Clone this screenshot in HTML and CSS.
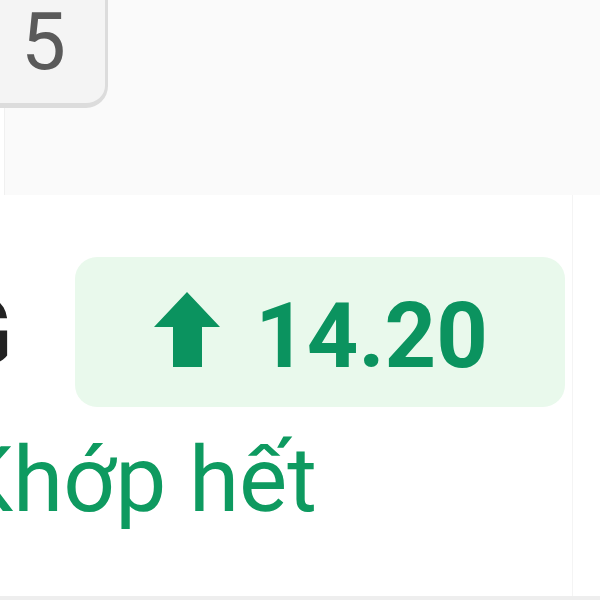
FILE: index.html
```html
<!DOCTYPE html>
<html lang="vi">
<head>
  <meta charset="UTF-8" />
  <meta name="viewport" content="width=device-width, initial-scale=1.0" />
  <title>Khớp lệnh</title>
  <link rel="stylesheet" href="styles.css">
</head>
<body>
  <div class="screen">
    <div class="keypad">
      <div class="key">5</div>
    </div>
    <div class="order">
      <div class="order-row">
        <span class="symbol">G</span>
        <div class="price-badge">
          <svg class="arrow" viewBox="0 0 66 75" width="66" height="75">
            <path d="M33 0 L66 35 L48 35 L48 75 L19 75 L19 35 L0 35 Z" fill="#0b935f"/>
          </svg>
          <span class="price">14.20</span>
        </div>
      </div>
      <div class="status">Khớp hết</div>
    </div>
    <div class="bottom-bar"></div>
  </div>
</body>
</html>
```

FILE: styles.css
```css
* {
  box-sizing: border-box;
}
body {
  margin: 0;
  padding: 0;
  font-family: Roboto, 'Liberation Sans', sans-serif;
  background: #ffffff;
}
.screen {
  width: 600px;
  height: 600px;
  overflow: hidden;
  display: flex;
  flex-direction: column;
}
.keypad {
  height: 195px;
  flex-shrink: 0;
  background: #fafafa;
  border-left: 1px solid #f0f0f0;
  margin-left: 4px;
}
.key {
  width: 130px;
  height: 131px;
  margin-top: -23px;
  margin-left: -27px;
  background: #f4f4f4;
  border: 3px solid #dcdcdc;
  border-bottom-width: 5px;
  border-radius: 22px;
  color: #5a5a5a;
  font-size: 80px;
  line-height: 124px;
  text-align: right;
  padding-right: 39px;
}
.order {
  flex: 1;
  padding-top: 62px;
  border-right: 1px solid #f4f4f4;
  margin-right: 27px;
}
.order-row {
  display: flex;
  align-items: center;
  height: 150px;
}
.symbol {
  width: 75px;
  flex-shrink: 0;
  margin-left: -62px;
  font-size: 92px;
  font-weight: 500;
  color: #222222;
  text-align: right;
  overflow: hidden;
}
.price-badge {
  margin-left: 62px;
  width: 490px;
  height: 150px;
  background: #e9f9ec;
  border-radius: 22px;
  display: flex;
  align-items: center;
  justify-content: center;
  gap: 35px;
  padding-left: 2px;
}
.arrow {
  display: block;
  margin-top: -6px;
}
.price {
  font-size: 90px;
  font-weight: 700;
  color: #0b935f;
  margin-top: 8px;
}
.status {
  margin-left: -44px;
  margin-top: 18px;
  font-size: 91px;
  line-height: 110px;
  color: #0e9a60;
  white-space: nowrap;
}
.bottom-bar {
  height: 4px;
  flex-shrink: 0;
  background: #eeeeee;
}
```
